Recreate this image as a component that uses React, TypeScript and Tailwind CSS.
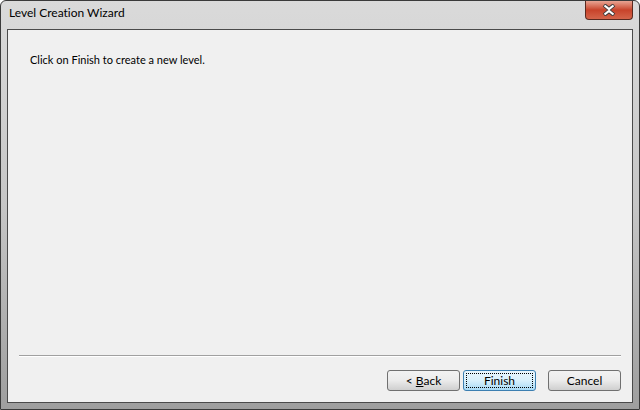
import React from 'react';

const font = { fontFamily: 'Lato, "Noto Sans", sans-serif' };

const WizardButton: React.FC<{ children: React.ReactNode; primary?: boolean; className?: string }> = ({
  children,
  primary,
  className = '',
}) => {
  return (
    <button
      className={
        (primary
          ? 'relative block h-[21px] w-[73px] rounded-[3px] border border-[#3c7fb1] bg-gradient-to-b from-[#eaf6fd] via-[#d9f0fc] to-[#a7d9f5] text-[12px] leading-none text-black'
          : 'relative block h-[21px] w-[73px] rounded-[3px] border border-[#707070] bg-gradient-to-b from-[#f2f2f2] via-[#ebebeb] to-[#cfcfcf] text-[12px] leading-none text-black') +
        ' ' +
        className
      }
    >
      {primary && <span className="absolute inset-[2px] border border-dotted border-black" />}
      <span className="relative">{children}</span>
    </button>
  );
};

const App: React.FC = () => {
  return (
    <div className="h-[410px] w-[640px] bg-white [font-variant-ligatures:none]" style={font}>
      <div className="flex h-full w-full flex-col rounded-t-[6px] border border-[#3a3a3a] bg-gradient-to-b from-[#dadada] via-[#c6c6c6] to-[#9e9e9e] px-[6px] pb-[6px]">
        {/* Title bar */}
        <div className="flex h-[28px] items-start justify-between">
          <div className="pl-[2px] pt-[6px] text-[12px] leading-none text-black">Level Creation Wizard</div>
          <div className="flex h-[19px] w-[48px] items-center justify-center rounded-b-[4px] border border-t-0 border-[#5a2a20] bg-gradient-to-b from-[#e8a493] via-[#c8432a] to-[#d4644a]">
            <svg width="14" height="12" viewBox="0 0 14 12">
              <path d="M2 1 L7 5 L12 1 M2 11 L7 7 L12 11" stroke="#3a3a3a" strokeWidth="4" fill="none" />
              <path d="M2.5 1.5 L7 5.2 L11.5 1.5 M2.5 10.5 L7 6.8 L11.5 10.5" stroke="#ffffff" strokeWidth="2.2" fill="none" />
            </svg>
          </div>
        </div>

        {/* Client area */}
        <div className="flex flex-1 flex-col border border-[#4a4a4a] bg-[#f0f0f0]">
          <div className="flex-1 pl-[22px] pt-[24px] text-[11px] leading-none text-black">
            Click on Finish to create a new level.
          </div>
          <div className="mx-[11px] h-0 border-t border-b border-t-[#a0a0a0] border-b-white" />
          <div className="flex justify-end px-[11px] pb-[11px] pt-[13px]">
            <WizardButton>
              &lt; <span className="underline">B</span>ack
            </WizardButton>
            <WizardButton primary className="ml-[3px]">
              Finish
            </WizardButton>
            <WizardButton className="ml-[12px]">Cancel</WizardButton>
          </div>
        </div>
      </div>
    </div>
  );
};

export default App;
